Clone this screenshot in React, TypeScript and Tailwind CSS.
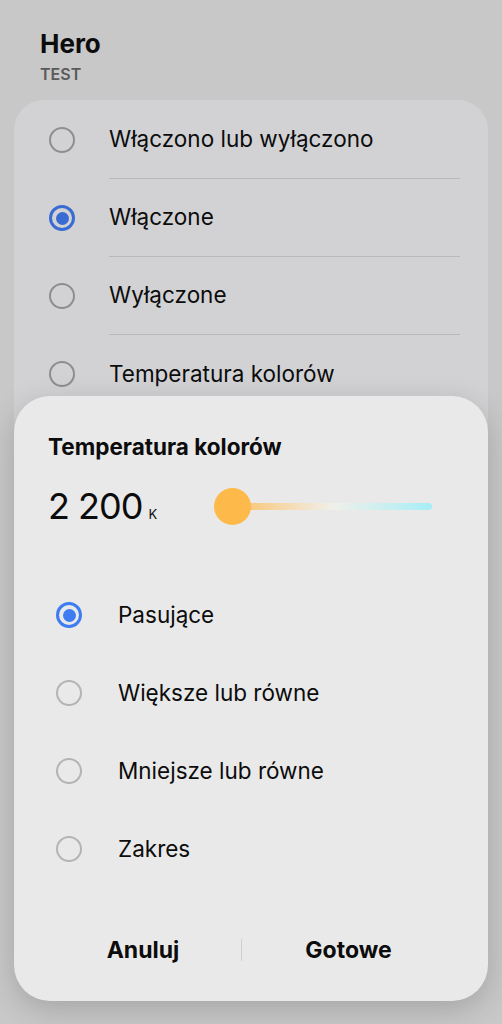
import React from "react";

const Radio = ({ checked, dim }: { checked?: boolean; dim?: boolean }) =>
  checked ? (
    <span
      className={`flex size-[26px] shrink-0 items-center justify-center rounded-full border-[3px] ${
        dim ? "border-[#3a6bd3]" : "border-[#3d7cf2]"
      }`}
    >
      <span className={`size-[13px] rounded-full ${dim ? "bg-[#3a6bd3]" : "bg-[#3d7cf2]"}`} />
    </span>
  ) : (
    <span
      className={`size-[26px] shrink-0 rounded-full border-[2.5px] ${
        dim ? "border-[#8e8e90]" : "border-[#b4b4b4]"
      }`}
    />
  );

const backRows = [
  { label: "Włączono lub wyłączono" },
  { label: "Włączone", checked: true },
  { label: "Wyłączone" },
  { label: "Temperatura kolorów" },
];

const dialogRows = [
  { label: "Pasujące", checked: true },
  { label: "Większe lub równe" },
  { label: "Mniejsze lub równe" },
  { label: "Zakres" },
];

export default function App() {
  return (
    <div
      className="relative h-[1024px] w-full overflow-hidden bg-[#c8c8c8] text-[#0c0c0c]"
      style={{ fontFamily: "Inter, 'Noto Sans', sans-serif" }}
    >
      <div className="px-[40px] pt-[28px]">
        <h1 className="text-[26px] font-bold leading-[32px]">Hero</h1>
        <p className="mt-[5px] text-[16px] font-semibold leading-[18px] text-[#5a5a5a]">TEST</p>
      </div>

      {/* list behind the dialog */}
      <div className="mx-[14px] mt-[17px] rounded-[30px] bg-[#d2d2d4] pt-[1px]">
        {backRows.map((row, i) => (
          <div key={row.label} className="flex h-[78px] items-center">
            <div className="flex w-[95px] justify-center pl-[1px]">
              <Radio checked={row.checked} dim />
            </div>
            <div
              className={`mr-[28px] flex h-full flex-1 items-center ${
                i < backRows.length - 1 ? "border-b border-[#b9b9bb]" : ""
              }`}
            >
              <span className="text-[22.5px] leading-none">{row.label}</span>
            </div>
          </div>
        ))}
        <div className="h-[560px]" />
      </div>

      <div className="absolute left-[14px] right-[14px] top-[396px] h-[605px] rounded-[36px] bg-[#e9e9e9] shadow-[0_8px_30px_rgba(0,0,0,0.18)]">
        <div className="px-[34px] pt-[37px]">
          <h2 className="text-[22.5px] font-bold leading-[28px]">Temperatura kolorów</h2>
          <div className="mt-[25px] flex items-center">
            <div className="flex w-[166px] items-baseline">
              <span className="text-[36px] leading-[40px] tracking-[-1px]">2 200</span>
              <span className="ml-[6px] text-[13px] leading-none">K</span>
            </div>
            <div className="relative flex h-[37px] w-[218px] items-center">
              <div className="ml-[18px] h-[7px] flex-1 rounded-full bg-gradient-to-r from-[#fac062] via-[#f0efe9] to-[#a5eef6]" />
              <div className="absolute left-0 top-0 size-[37px] rounded-full bg-[#fdb94a]" />
            </div>
          </div>
        </div>

        <div className="mt-[50px]">
          {dialogRows.map((row) => (
            <div key={row.label} className="flex h-[78px] items-center">
              <div className="flex w-[104px] justify-center pl-[6px]">
                <Radio checked={row.checked} />
              </div>
              <span className="text-[22.5px] leading-none">{row.label}</span>
            </div>
          ))}
        </div>

        <div className="mt-[45px] flex items-center pl-[31px] pr-[33px]">
          <button className="w-[196px] text-center text-[23px] font-bold">Anuluj</button>
          <span className="h-[22px] w-px bg-[#d0d0d0]" />
          <button className="flex-1 text-center text-[23px] font-bold">Gotowe</button>
        </div>
      </div>
    </div>
  );
}
